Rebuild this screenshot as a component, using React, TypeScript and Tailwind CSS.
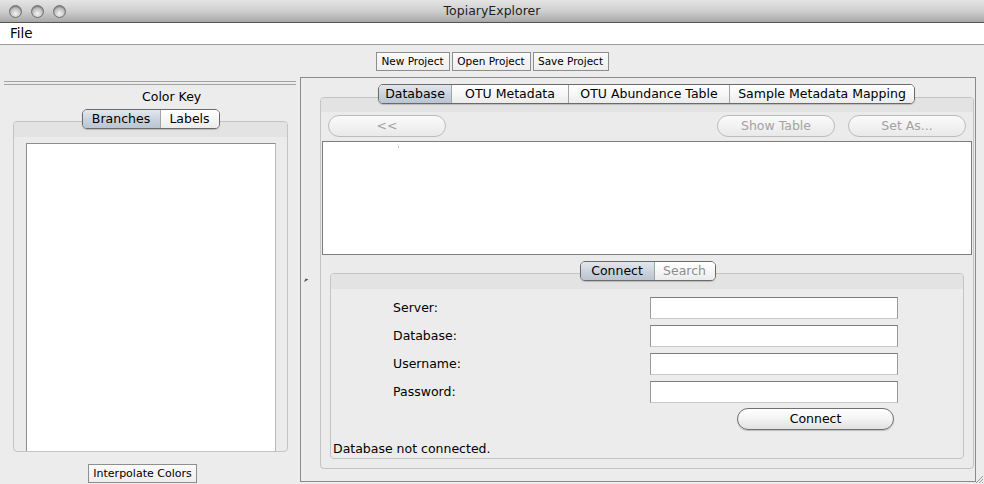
import React from "react";

function Seg({
  w,
  selected,
  disabled,
  first,
  children,
}: {
  w: string;
  selected?: boolean;
  disabled?: boolean;
  first?: boolean;
  children: React.ReactNode;
}) {
  return (
    <div
      className={[
        "h-full flex items-center justify-center text-[12.5px] leading-none",
        w,
        first ? "" : "border-l border-[#a3a3a3]",
        selected
          ? "bg-gradient-to-b from-[#e2e7ed] via-[#cbd4de] to-[#b9c5d2] text-black"
          : "bg-gradient-to-b from-white via-[#f7f7f7] to-[#ebebeb]",
        disabled ? "text-[#8e8e8e]" : "text-black",
      ].join(" ")}
    >
      {children}
    </div>
  );
}

function Tabs({ children }: { children: React.ReactNode }) {
  return (
    <div className="flex h-[20px] rounded-[5px] border border-[#6a6a6a] overflow-hidden shadow-[0_1px_1px_rgba(0,0,0,0.18)]">
      {children}
    </div>
  );
}

function Pill({
  w,
  disabled,
  children,
}: {
  w: string;
  disabled?: boolean;
  children: React.ReactNode;
}) {
  return (
    <div
      className={[
        "h-[22px] rounded-full border flex items-center justify-center text-[12.5px] leading-none",
        w,
        disabled
          ? "border-[#bcbcbc] text-[#a2a2a2] bg-gradient-to-b from-[#fafafa] via-[#f2f2f2] to-[#e9e9e9]"
          : "border-[#6f6f6f] text-black bg-gradient-to-b from-white via-[#f3f3f3] to-[#e1e1e1] shadow-[0_1px_1px_rgba(0,0,0,0.2)]",
      ].join(" ")}
    >
      {children}
    </div>
  );
}

function SmallBtn({ w, children }: { w: string; children: React.ReactNode }) {
  return (
    <div
      className={[
        "h-[19px] border border-[#8e8e8e] bg-gradient-to-b from-[#fbfbfb] to-[#eeeeee] flex items-center justify-center text-[10.5px] leading-none text-black",
        w,
      ].join(" ")}
    >
      {children}
    </div>
  );
}

function Field() {
  return (
    <div className="h-[22px] w-[248px] bg-white border border-[#9a9a9a] border-t-[#7c7c7c] border-b-[#c9c9c9]" />
  );
}

export default function App() {
  return (
    <div className="relative w-[984px] h-[484px] overflow-hidden bg-[#ececec] flex flex-col font-['Lucida_Grande','DejaVu_Sans',sans-serif] text-black">
      {/* title bar */}
      <div className="h-[23px] shrink-0 grid grid-cols-[1fr_auto_1fr] items-center bg-gradient-to-b from-[#e4e4e4] via-[#cfcfcf] to-[#a8a8a8] border-b border-[#545454]">
        <div className="flex gap-[9px] pl-[9px]">
          {[0, 1, 2].map((i) => (
            <div
              key={i}
              className="w-[13px] h-[13px] rounded-full border border-[#6f6f6f] bg-[radial-gradient(circle_at_50%_70%,#f4f4f4_0%,#c9c9c9_45%,#8e8e8e_100%)] shadow-[inset_0_1px_1px_rgba(0,0,0,0.25)]"
            />
          ))}
        </div>
        <div className="text-[12.5px] text-[#1e1e1e] leading-none">TopiaryExplorer</div>
        <div />
      </div>

      {/* menu bar */}
      <div className="h-[22px] shrink-0 bg-white border-b border-[#9c9c9c] flex items-center pl-[10px]">
        <span className="text-[13.5px] leading-none">File</span>
      </div>

      {/* toolbar */}
      <div className="h-[32px] shrink-0 flex justify-center gap-[2px] pt-[7px]">
        <SmallBtn w="w-[74px]">New Project</SmallBtn>
        <SmallBtn w="w-[79px]">Open Project</SmallBtn>
        <SmallBtn w="w-[76px]">Save Project</SmallBtn>
      </div>

      {/* main */}
      <div className="flex-1 flex min-h-0">
        {/* left panel */}
        <div className="w-[300px] shrink-0 flex flex-col pt-[4px]">
          <div className="mx-[4px] h-[4px] border-t border-b border-[#a2a2a2]" />
          <div className="mt-[5px] pl-[142px] text-[12.5px] leading-[14px]">Color Key</div>
          <div className="mt-[5px] flex flex-col">
            <div className="relative z-10 flex justify-center pl-[1px] -mb-[8px] w-[300px]">
              <Tabs>
                <Seg w="w-[77px]" selected first>
                  Branches
                </Seg>
                <Seg w="w-[59px]">Labels</Seg>
              </Tabs>
            </div>
            <div className="ml-[13px] w-[275px] h-[331px] rounded-[4px] border border-[#c4c4c4] bg-[#ebebeb] flex flex-col overflow-hidden">
              <div className="h-[15px] shrink-0 bg-[#e3e3e3]" />
              <div className="flex-1 flex pl-[12px] pr-[11px] pt-[6px]">
                <div className="flex-1 bg-white border border-[#8c8c8c] border-r-[#b9b9b9] border-b-0" />
              </div>
            </div>
          </div>
          <div className="mt-[12px] ml-[88px]">
            <SmallBtn w="w-[109px] h-[18px] text-[11px]">Interpolate Colors</SmallBtn>
          </div>
        </div>

        {/* right panel */}
        <div className="w-[676px] h-[405px] shrink-0 border border-[#8b8b8b] flex">
          {/* divider with arrow */}
          <div className="w-[18px] shrink-0 flex items-center pl-[3px]">
            <svg width="5" height="4" viewBox="0 0 5 4">
              <path d="M0 4 L1.5 0.5 L4.5 1.5 Z" fill="#555" />
            </svg>
          </div>
          <div className="flex-1 flex flex-col pt-[6px]">
            <div className="relative z-10 flex justify-center -mb-[7px] pr-[1px]">
              <Tabs>
                <Seg w="w-[72px]" selected first>
                  Database
                </Seg>
                <Seg w="w-[117px]">OTU Metadata</Seg>
                <Seg w="w-[161px]">OTU Abundance Table</Seg>
                <Seg w="w-[185px]">Sample Metadata Mapping</Seg>
              </Tabs>
            </div>
            <div className="ml-[1px] w-[654px] h-[372px] rounded-[4px] border border-[#c4c4c4] bg-[#ebebeb] flex flex-col overflow-hidden">
              <div className="h-[14px] shrink-0 bg-[#e3e3e3]" />
              <div className="mt-[3px] flex px-[7px]">
                <Pill w="w-[118px]" disabled>
                  &lt;&lt;
                </Pill>
                <div className="flex-1" />
                <Pill w="w-[118px]" disabled>
                  Show Table
                </Pill>
                <div className="w-[13px]" />
                <Pill w="w-[118px]" disabled>
                  Set As...
                </Pill>
              </div>
              <div className="relative mt-[4px] mx-[1px] h-[114px] bg-white border border-[#7d7d7d]">
                <div className="absolute left-[75px] top-[4px] w-px h-[2px] bg-[#bdbdbd]" />
              </div>
              <div className="mt-[6px] flex flex-col">
                <div className="relative z-10 flex justify-center -mb-[8px] pl-[1px]">
                  <Tabs>
                    <Seg w="w-[73px]" selected first>
                      Connect
                    </Seg>
                    <Seg w="w-[61px]" disabled>
                      Search
                    </Seg>
                  </Tabs>
                </div>
                <div className="ml-[9px] w-[634px] h-[186px] rounded-[4px] border border-[#c4c4c4] bg-[#ececec] flex flex-col overflow-hidden">
                  <div className="h-[15px] shrink-0 bg-[#e3e3e3]" />
                  <div className="mt-[8px] pl-[62px] grid grid-cols-[257px_248px] gap-y-[6px] items-center">
                    <div className="text-[12.5px] leading-none">Server:</div>
                    <Field />
                    <div className="text-[12.5px] leading-none">Database:</div>
                    <Field />
                    <div className="text-[12.5px] leading-none">Username:</div>
                    <Field />
                    <div className="text-[12.5px] leading-none">Password:</div>
                    <Field />
                  </div>
                  <div className="mt-[5px] pl-[406px]">
                    <Pill w="w-[157px]">Connect</Pill>
                  </div>
                  <div className="mt-[12px] pl-[2px] text-[12.5px] leading-[14px]">Database not connected.</div>
                </div>
              </div>
            </div>
          </div>
        </div>
      </div>

      {/* resize grip */}
      <svg className="absolute right-0 bottom-0" width="10" height="10" viewBox="0 0 10 10">
        <path d="M9 2 L2 9 M9 5 L5 9 M9 8 L8 9" stroke="#9a9a9a" strokeWidth="1" />
      </svg>
    </div>
  );
}
